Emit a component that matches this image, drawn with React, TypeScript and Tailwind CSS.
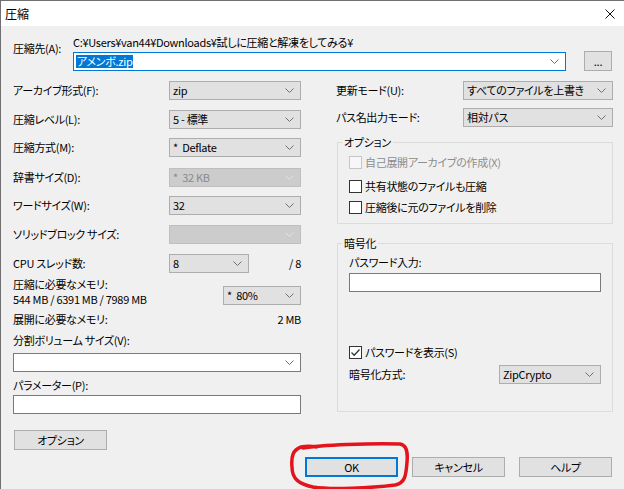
import React from 'react';

const Chevron = ({ disabled }: { disabled?: boolean }) => (
  <svg width="9" height="5" viewBox="0 0 9 5" className="shrink-0">
    <path d="M0.5 0.5 L4.5 4.5 L8.5 0.5" fill="none" stroke={disabled ? '#e2e2e2' : '#707070'} strokeWidth="1" />
  </svg>
);

const Select = ({
  value,
  className = '',
  disabled,
  editable,
}: {
  value?: string;
  className?: string;
  disabled?: boolean;
  editable?: boolean;
}) => (
  <div
    className={
      'h-[19px] border flex items-center justify-between pl-[3px] pr-[6px] ' +
      (editable
        ? 'bg-white border-[#7a7a7a] '
        : disabled
        ? 'bg-[#cccccc] border-[#bfbfbf] text-[#8a8a8a] '
        : 'bg-[#e1e1e1] border-[#adadad] ') +
      className
    }
  >
    <span className="whitespace-pre leading-none">{value}</span>
    <Chevron disabled={disabled} />
  </div>
);

const CheckBox = ({ label, checked, disabled }: { label: string; checked?: boolean; disabled?: boolean }) => (
  <div className="flex items-center h-[13px]">
    <div
      className={
        'w-[13px] h-[13px] border flex items-center justify-center ' +
        (disabled ? 'border-[#c6c6c6] bg-[#f7f7f7]' : 'border-[#333333] bg-white')
      }
    >
      {checked && (
        <svg width="11" height="11" viewBox="0 0 11 11">
          <path d="M1.5 5.5 L4.2 8.2 L9.5 2.5" fill="none" stroke="#333" strokeWidth="1.3" />
        </svg>
      )}
    </div>
    <span className={'ml-[3px] leading-none ' + (disabled ? 'text-[#8d8d8d]' : '')}>{label}</span>
  </div>
);

const Button = ({ label, className = '', primary }: { label: string; className?: string; primary?: boolean }) => (
  <div
    className={
      'h-[20px] w-[93px] flex items-center justify-center bg-[#e1e1e1] ' +
      (primary ? 'border-2 border-[#0078d7] ' : 'border border-[#adadad] ') +
      className
    }
  >
    {label}
  </div>
);

const Group = ({ title, className = '', children }: { title: string; className?: string; children: React.ReactNode }) => (
  <div className={'relative border border-[#dcdcdc] ' + className}>
    <span className="absolute -top-[8px] left-[4px] bg-[#f0f0f0] px-[2px] leading-[14px]">{title}</span>
    {children}
  </div>
);

const Row = ({ label, children, className = '' }: { label: string; children: React.ReactNode; className?: string }) => (
  <div className={'flex items-center justify-between h-[19px] ' + className}>
    <span className="leading-none">{label}</span>
    {children}
  </div>
);

export default function App() {
  return (
    <div className="relative w-[624px] h-[489px] overflow-hidden bg-[#f0f0f0] border-l border-t border-[#707070] text-black text-[11px] tracking-[-0.3px] font-['Noto_Sans_CJK_JP',sans-serif] [font-feature-settings:'palt']">
      {/* title bar */}
      <div className="h-[25px] bg-white flex items-center justify-between pl-[4px] pr-[9px]">
        <span className="leading-none text-[12px] tracking-normal">圧縮</span>
        <svg width="10" height="10" viewBox="0 0 10 10">
          <path d="M0.5 0.5 L9.5 9.5 M9.5 0.5 L0.5 9.5" stroke="#111" strokeWidth="1" />
        </svg>
      </div>

      <div className="pl-[12px] pr-[11px]">
        {/* destination */}
        <div className="flex pt-[9px]">
          <span className="w-[60px] mt-[6px] leading-[14px]">圧縮先(A):</span>
          <div className="flex-1 flex flex-col">
            <span className="leading-[14px] whitespace-nowrap">C:¥Users¥van44¥Downloads¥試しに圧縮と解凍をしてみる¥</span>
            <div className="mt-[2px] flex items-center">
              <div className="w-[493px] h-[19px] bg-white border border-[#0078d7] flex items-center justify-between pl-[2px] pr-[6px]">
                <span className="bg-[#0078d7] text-white leading-[13px] px-[1px]">アメンボ.zip</span>
                <Chevron />
              </div>
              <div className="ml-[18px] w-[28px] h-[20px] bg-[#e1e1e1] border border-[#adadad] flex items-center justify-center leading-none">
                ...
              </div>
            </div>
          </div>
        </div>

        <div className="flex mt-[10px]">
          {/* left column */}
          <div className="w-[288px] flex flex-col">
            <Row label="アーカイブ形式(F):">
              <Select value="zip" className="w-[132px]" />
            </Row>
            <Row label="圧縮レベル(L):" className="mt-[10px]">
              <Select value="5 - 標準" className="w-[132px]" />
            </Row>
            <Row label="圧縮方式(M):" className="mt-[9px]">
              <Select value="*  Deflate" className="w-[132px]" />
            </Row>
            <Row label="辞書サイズ(D):" className="mt-[11px]">
              <Select value="*  32 KB" disabled className="w-[132px]" />
            </Row>
            <Row label="ワードサイズ(W):" className="mt-[9px]">
              <Select value="32" className="w-[132px]" />
            </Row>
            <Row label="ソリッドブロック サイズ:" className="mt-[10px]">
              <Select value="" disabled className="w-[132px]" />
            </Row>
            <div className="mt-[10px] flex items-center h-[19px]">
              <span className="w-[156px] leading-none">CPU スレッド数:</span>
              <Select value="8" className="w-[80px]" />
              <span className="ml-auto leading-none">/ 8</span>
            </div>
            <div className="mt-[4px] flex items-start justify-between">
              <div className="flex flex-col">
                <span className="leading-[14px]">圧縮に必要なメモリ:</span>
                <span className="leading-[14px] mt-[1px]">544 MB / 6391 MB / 7989 MB</span>
              </div>
              <Select value="*  80%" className="w-[78px] mt-[9px]" />
            </div>
            <div className="mt-[6px] flex justify-between leading-[14px]">
              <span>展開に必要なメモリ:</span>
              <span>2 MB</span>
            </div>
            <span className="mt-[7px] leading-[14px]">分割ボリューム サイズ(V):</span>
            <Select editable className="mt-[6px] w-full" />
            <span className="mt-[6px] leading-[14px]">パラメーター(P):</span>
            <div className="mt-[3px] h-[19px] bg-white border border-[#7a7a7a]" />
            <Button label="オプション" className="mt-[16px] ml-[1px] h-[19px]" />
          </div>

          {/* right column */}
          <div className="ml-[35px] w-[277px] flex flex-col">
            <div className="flex items-center h-[19px]">
              <span className="w-[127px] leading-none">更新モード(U):</span>
              <Select value="すべてのファイルを上書き" className="w-[150px]" />
            </div>
            <div className="flex items-center h-[19px] mt-[8px]">
              <span className="w-[127px] leading-none">パス名出力モード:</span>
              <Select value="相対パス" className="w-[150px]" />
            </div>
            <Group title="オプション" className="mt-[15px] ml-[1px] h-[82px] pt-[13px] pl-[11px]">
              <CheckBox label="自己展開アーカイブの作成(X)" disabled />
              <div className="mt-[11px]">
                <CheckBox label="共有状態のファイルも圧縮" />
              </div>
              <div className="mt-[8px]">
                <CheckBox label="圧縮後に元のファイルを削除" />
              </div>
            </Group>
            <Group title="暗号化" className="mt-[19px] ml-[1px] h-[169px] pt-[11px] px-[11px] flex flex-col">
              <span className="leading-[14px]">パスワード入力:</span>
              <div className="mt-[4px] h-[19px] bg-white border border-[#7a7a7a]" />
              <div className="mt-[54px]">
                <CheckBox label="パスワードを表示(S)" checked />
              </div>
              <div className="mt-[6px] flex items-center justify-between h-[19px]">
                <span className="leading-none">暗号化方式:</span>
                <Select value="ZipCrypto" className="w-[102px]" />
              </div>
            </Group>
          </div>
        </div>

        {/* bottom buttons */}
        <div className="mt-[7px] mr-[1px] flex justify-end gap-[14px]">
          <Button label="OK" primary />
          <Button label="キャンセル" />
          <Button label="ヘルプ" />
        </div>
      </div>

      {/* red hand-drawn mark */}
      <svg className="absolute left-0 top-0 pointer-events-none" width="624" height="489" viewBox="0 0 624 489">
        <path
          d="M 302 447 C 320 444, 370 442, 399 443 C 406 444, 407 451, 406 461 C 405 475, 404 482, 394 484 C 370 487, 330 489, 312 486 C 298 483, 291 478, 291 466 C 290 455, 292 449, 300 446 C 305 445, 310 445, 316 446"
          fill="none"
          stroke="#e3141c"
          strokeWidth="3.5"
          strokeLinecap="round"
        />
      </svg>
    </div>
  );
}
